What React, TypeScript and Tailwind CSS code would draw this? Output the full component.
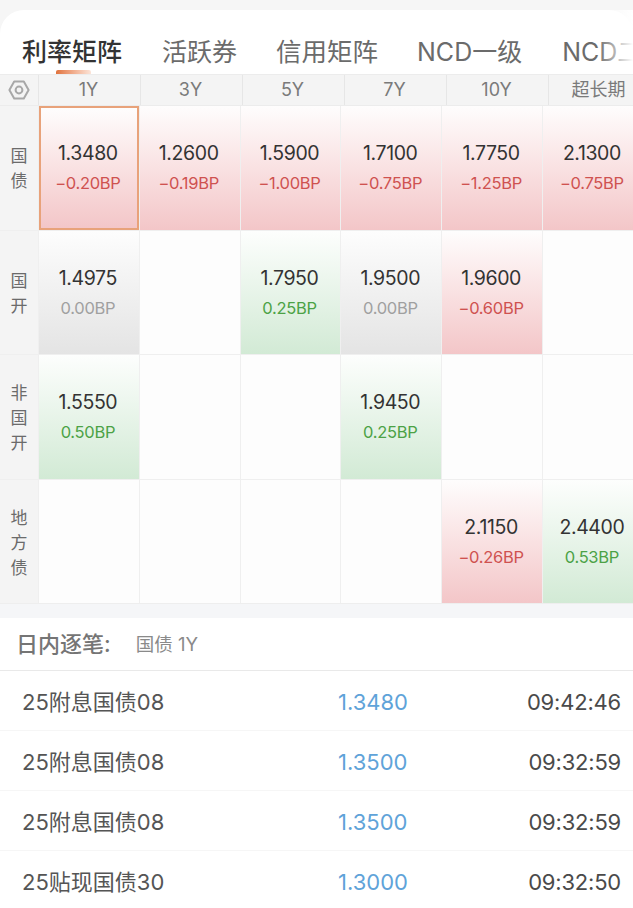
const FONT = { fontFamily: 'Inter,"Noto Sans CJK SC",sans-serif' };

type Cell = { v: string; d: string; t: 'r' | 'g' | 'n'; sel?: boolean } | null;

const heads = ['1Y', '3Y', '5Y', '7Y', '10Y', '超长期'];
const rows: { name: string[]; cells: Cell[] }[] = [
  {
    name: ['国', '债'],
    cells: [
      { v: '1.3480', d: '−0.20BP', t: 'r', sel: true },
      { v: '1.2600', d: '−0.19BP', t: 'r' },
      { v: '1.5900', d: '−1.00BP', t: 'r' },
      { v: '1.7100', d: '−0.75BP', t: 'r' },
      { v: '1.7750', d: '−1.25BP', t: 'r' },
      { v: '2.1300', d: '−0.75BP', t: 'r' },
    ],
  },
  {
    name: ['国', '开'],
    cells: [
      { v: '1.4975', d: '0.00BP', t: 'n' },
      null,
      { v: '1.7950', d: '0.25BP', t: 'g' },
      { v: '1.9500', d: '0.00BP', t: 'n' },
      { v: '1.9600', d: '−0.60BP', t: 'r' },
      null,
    ],
  },
  {
    name: ['非', '国', '开'],
    cells: [
      { v: '1.5550', d: '0.50BP', t: 'g' },
      null,
      null,
      { v: '1.9450', d: '0.25BP', t: 'g' },
      null,
      null,
    ],
  },
  {
    name: ['地', '方', '债'],
    cells: [
      null,
      null,
      null,
      null,
      { v: '2.1150', d: '−0.26BP', t: 'r' },
      { v: '2.4400', d: '0.53BP', t: 'g' },
    ],
  },
];

const ticks = [
  ['25附息国债08', '1.3480', '09:42:46'],
  ['25附息国债08', '1.3500', '09:32:59'],
  ['25附息国债08', '1.3500', '09:32:59'],
  ['25贴现国债30', '1.3000', '09:32:50'],
];

function DataCell({ c }: { c: Cell }) {
  if (!c) return <div className="bg-[#fdfdfd]" />;
  const bg =
    c.t === 'r'
      ? 'bg-gradient-to-b from-[#fefdfd] to-[#f3c6c8]'
      : c.t === 'g'
        ? 'bg-gradient-to-b from-[#fdfefd] to-[#d2ead5]'
        : 'bg-gradient-to-b from-[#fdfdfd] to-[#e4e4e4]';
  const col = c.t === 'r' ? 'text-[#cf5250]' : c.t === 'g' ? 'text-[#4ca246]' : 'text-[#a0a0a0]';
  return (
    <div className={`flex flex-col items-center justify-center pb-[1px] pr-[2px] ${bg} ${c.sel ? 'border-2 border-[#e8a27a]' : ''}`}>
      <div className="text-[19.5px] leading-[26px] tracking-[-0.4px] text-[#333333]">{c.v}</div>
      <div className={`mt-[6px] text-[16.5px] leading-[22px] tracking-[-0.3px] ${col}`}>{c.d}</div>
    </div>
  );
}

export default function App() {
  return (
    <div className="h-[908px] w-[633px] overflow-hidden bg-[#f6f6f6] pt-[10px]" style={FONT}>
      <div className="rounded-t-[24px] bg-white">
        <div className="relative flex h-[64px] items-end overflow-hidden whitespace-nowrap pb-[4px] pl-[22px] text-[25px] leading-[36px] text-[#6b6b6b]">
          <span className="w-[101px] font-medium text-[#333333]">利率矩阵</span>
          <span className="ml-[40px] w-[76px]">活跃券</span>
          <span className="ml-[39px] w-[102px] text-[25.5px]">信用矩阵</span>
          <span className="ml-[39px] w-[106px]">NCD一级</span>
          <span className="ml-[40px]">NCD二级</span>
          <div className="absolute bottom-0 left-[56px] h-[4px] w-[35px] rounded-t-[2px] bg-gradient-to-r from-[#e0733c] to-[#fbe4d8]" />
          <div className="absolute bottom-0 right-0 top-0 w-[36px] bg-gradient-to-r from-transparent to-white" />
        </div>

        <div className="bg-[#f4f4f4]">
          <div className="grid h-[32px] grid-cols-[38px_repeat(6,102px)] border-y border-[#ececec]">
            <div className="flex items-center justify-center pr-[1px]">
              <svg width="22" height="20" viewBox="0 0 22 20" fill="none" stroke="#a8a8a8" strokeWidth="2">
                <path d="M6.2 1.5h9.6L20.6 10l-4.8 8.5H6.2L1.4 10z" strokeLinejoin="round" />
                <circle cx="11" cy="10" r="3.4" />
              </svg>
            </div>
            {heads.map((h) => (
              <div key={h} className="flex items-center justify-center border-l border-[#e6e6e6] pr-[2px] text-[18px] leading-none text-[#7a7a7a]">
                {h}
              </div>
            ))}
          </div>

          <div className="flex flex-col gap-[1px] bg-[#efefef]">
            {rows.map((r) => (
              <div key={r.name.join('')} className="grid h-[123.6px] grid-cols-[38px_repeat(6,99.8px)] gap-x-[1px]">
                <div className="flex flex-col items-center justify-center bg-[#f4f4f4] pt-[3px] text-[17px] leading-[25px] text-[#6b6b6b]">
                  {r.name.map((n, i) => (
                    <span key={i}>{n}</span>
                  ))}
                </div>
                {r.cells.map((c, i) => (
                  <DataCell key={i} c={c} />
                ))}
              </div>
            ))}
          </div>
        </div>

        <div className="h-[15px] border-t border-[#eeeeee] bg-[#f5f6f8]" />

        <div className="flex h-[53px] items-center border-b border-[#e9e9e9] pl-[16px] pt-[1px]">
          <span className="text-[22px] font-medium text-[#757575]">日内逐笔:</span>
          <span className="ml-[25px] text-[18.5px] text-[#8a8a8a]">国债 1Y</span>
        </div>

        {ticks.map((t, i) => (
          <div key={i} className="flex h-[60px] items-center border-b border-[#f6f6f6] pl-[22px] pr-[12px] pt-[4px] text-[22px]">
            <span className="w-[316px] text-[#555555]">{t[0]}</span>
            <span className="text-[#5fa3d9]">{t[1]}</span>
            <span className="ml-auto tracking-[-0.2px] text-[#4a4a4a]">{t[2]}</span>
          </div>
        ))}
      </div>
    </div>
  );
}
